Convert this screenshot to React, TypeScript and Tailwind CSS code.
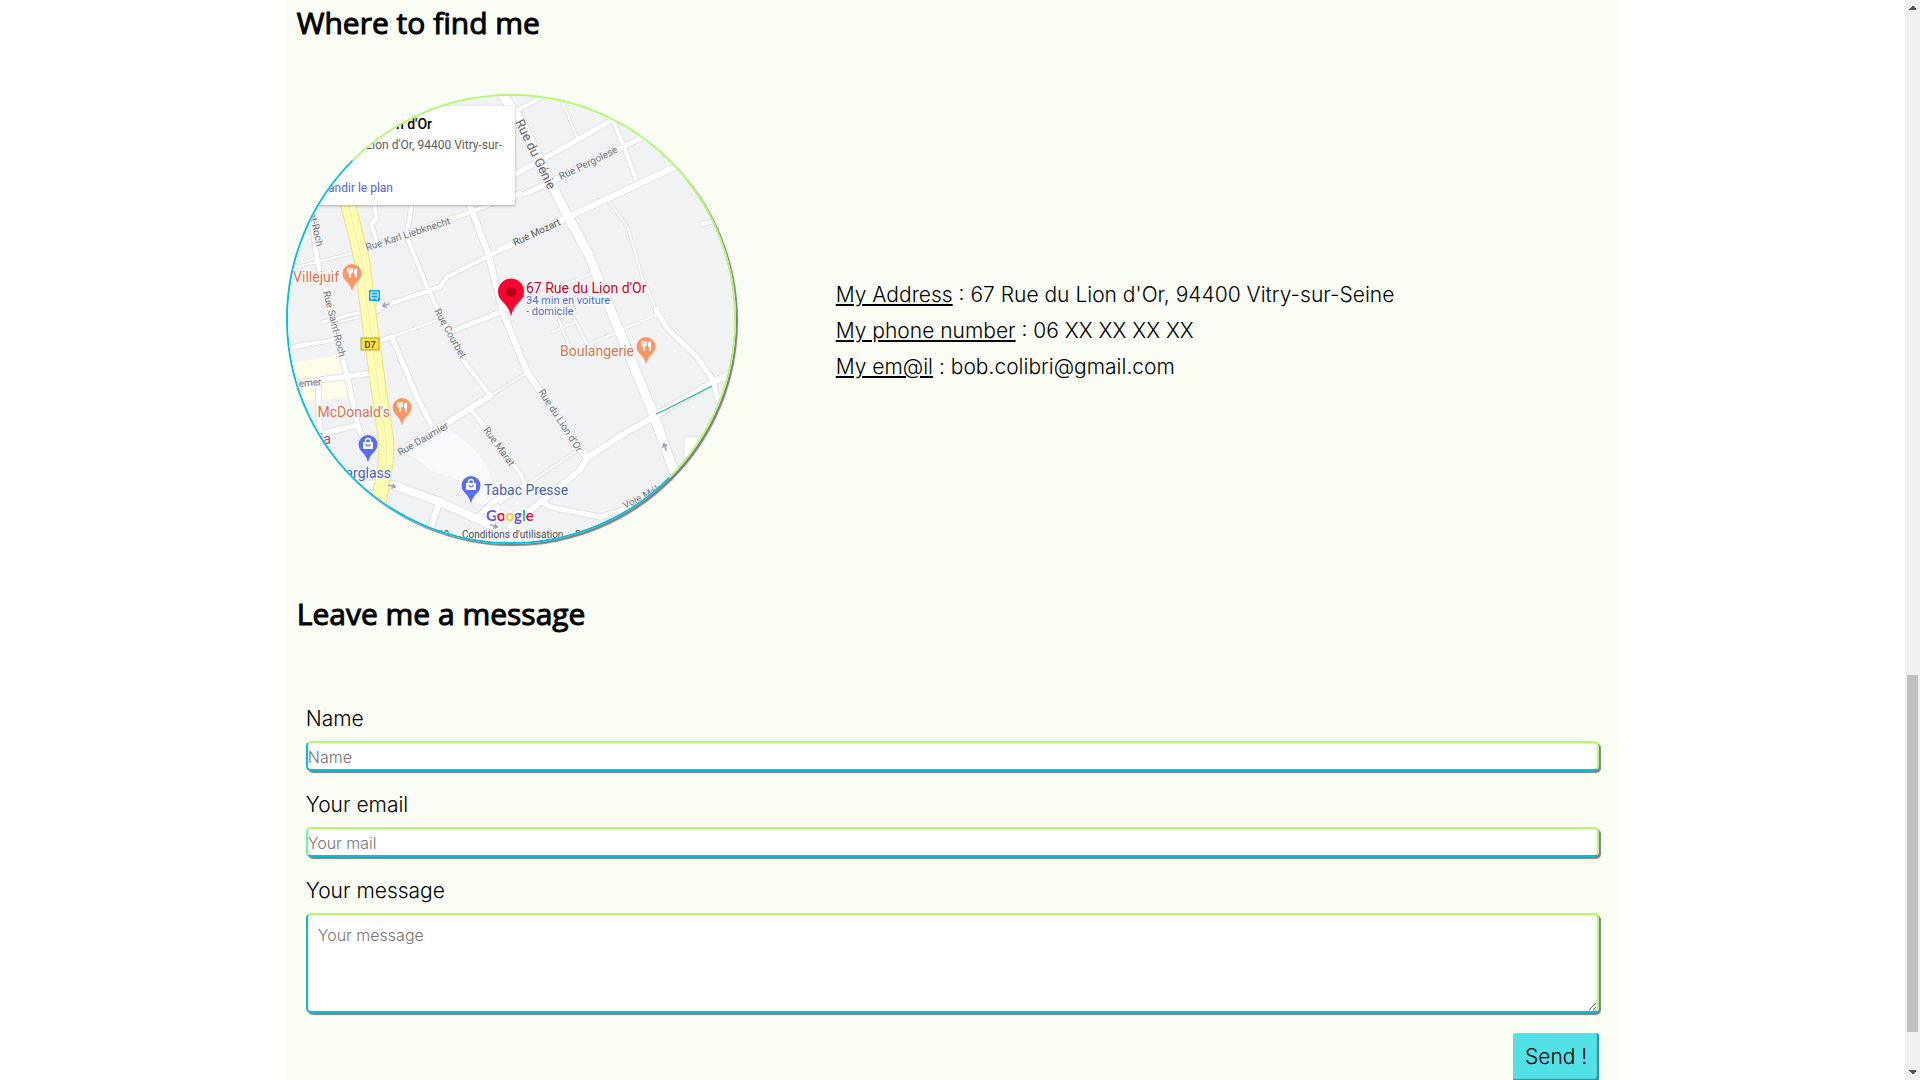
import React from "react";

const field =
  "block w-full rounded-[5px] border-2 border-t-[#b2fa6c] border-r-[#b2fa6c] border-b-[#00c0e0] bg-white font-light text-[16px] text-black placeholder:text-[#757575] placeholder:opacity-100 shadow-[2px_2px_1px_#808080] outline-none";

type Road = { d: string; w: number };

const roads: Road[] = [
  { d: "M293 268L353 253L367 247", w: 2 },
  { d: "M367 247L468 213L520 193", w: 4 },
  { d: "M375 200L375 210L377 218L371 224L377 242", w: 4 },
  { d: "M412 200L407 237L427 287L443 320L463 360L480 382L490 395", w: 4 },
  { d: "M312 217L317 260L325 287L343 360L348 380L358 427L368 448", w: 5 },
  { d: "M323 322L377 308", w: 3 },
  { d: "M340 322L380 311", w: 2 },
  { d: "M377 308L440 287L447 277L520 240", w: 4 },
  { d: "M286 349L298 346L333 340", w: 4 },
  { d: "M378 341L392 337", w: 4 },
  { d: "M392 337L443 318", w: 2 },
  { d: "M450 332L511 308", w: 5 },
  { d: "M392 337L417 397L433 428", w: 5 },
  { d: "M290 384L372 373", w: 5 },
  { d: "M318 383L320 434L358 425", w: 5 },
  { d: "M470 408L495 441L520 473L526 486", w: 4 },
  { d: "M490 396L520 377L530 371", w: 2 },
  { d: "M500 503L578 450", w: 2 },
  { d: "M480 515L493 502L525 486", w: 5 },
  { d: "M440 500L430 530", w: 6 },
  { d: "M518 110L542 97", w: 4 },
  { d: "M560 98L568 115L577 138", w: 2 },
  { d: "M510 177L547 157L614 119", w: 5 },
  { d: "M613 120L620 137L636 179", w: 4 },
  { d: "M512 198L527 193", w: 3 },
  { d: "M527 193L550 182L645 136", w: 5 },
  { d: "M663 150L668 167", w: 2 },
  { d: "M609 202L628 228L643 280L658 313", w: 2 },
  { d: "M656 310L667 328L697 357L713 380L720 408", w: 5 },
  { d: "M702 224L716 221", w: 4 },
  { d: "M592 273L533 298L515 306", w: 2 },
  { d: "M658 314L583 347L563 358", w: 2 },
  { d: "M552 332L575 322", w: 2 },
  { d: "M558 318L572 353", w: 2 },
  { d: "M574 318L588 347", w: 2 },
  { d: "M385 460L393 455L447 423L490 396", w: 6 },
  { d: "M468 200L488 253L503 313L527 372L555 413L587 458", w: 6 },
  { d: "M510 527L543 500L580 470L587 458L622 435L653 417L713 382L730 374", w: 6 },
  { d: "M543 502L550 507L600 517L623 510L662 490", w: 5 },
  { d: "M360 487L377 484L393 485L440 502L497 528", w: 8 },
  { d: "M500 250L568 217L675 167", w: 6 },
  { d: "M500 91L520 120L568 217L588 253L612 313L653 413L677 480", w: 9 },
];

type Label = { x: number; y: number; a: number; s: number; c: string; t: string };

const streets: Label[] = [
  { x: 367, y: 251, a: -18, s: 10, c: "#72767a", t: "Rue Karl Liebknecht" },
  { x: 515, y: 246, a: -25, s: 10, c: "#55564f", t: "Rue Mozart" },
  { x: 561, y: 180, a: -26, s: 10, c: "#72767a", t: "Rue Pergolese" },
  { x: 515, y: 122, a: 64, s: 13, c: "#65696d", t: "Rue du Génie" },
  { x: 306, y: 200, a: 77, s: 10, c: "#72767a", t: "Saint-Roch" },
  { x: 323, y: 292, a: 76, s: 10, c: "#72767a", t: "Rue Saint-Roch" },
  { x: 434, y: 311, a: 61, s: 10, c: "#72767a", t: "Rue Courbet" },
  { x: 299, y: 387, a: -5, s: 10, c: "#72767a", t: "emer" },
  { x: 400, y: 456, a: -30, s: 10, c: "#72767a", t: "Rue Daumier" },
  { x: 483, y: 430, a: 54, s: 10, c: "#72767a", t: "Rue Marat" },
  { x: 538, y: 392, a: 57, s: 10, c: "#72767a", t: "Rue du Lion d'Or" },
  { x: 625, y: 509, a: -27, s: 10, c: "#72767a", t: "Voie Mél" },
];

function Pin({ x, y, kind }: { x: number; y: number; kind: "food" | "shop" }) {
  return (
    <g transform={`translate(${x} ${y})`}>
      <path
        d="M0 19C-1 13-4 10-7 7A9.500 9.500 0 1 1 7 7C4 10 1 13 0 19Z"
        fill={kind === "food" ? "#ff9563" : "#586df5"}
        stroke="#fff"
        strokeWidth="1"
        paintOrder="stroke"
      />
      {kind === "food" ? (
        <>
          <path d="M-5-5H1V-2Q1 0-1 1V5H-3V1Q-5 0-5-2Z" fill="#fff" />
          <path d="M-3-5V-2M-1-5V-2" fill="none" stroke="#ff9563" strokeWidth="0.600" />
          <path d="M5-5V5H3V1H2V-2Q2-4 5-5Z" fill="#fff" />
        </>
      ) : (
        <>
          <path d="M-5-2H5V5H-5Z" fill="#fff" />
          <path d="M-2.500-2V-3A2.500 2.500 0 0 1 2.500-3V-2" fill="none" stroke="#fff" strokeWidth="1.300" />
          <path d="M-2 0A2 2 0 0 0 2 0" fill="none" stroke="#586df5" strokeWidth="1.200" />
        </>
      )}
    </g>
  );
}

function Arrow({ x, y, a }: { x: number; y: number; a: number }) {
  return (
    <path
      transform={`translate(${x} ${y}) rotate(${a})`}
      d="M-4 0H3M0-2.500L3.500 0L0 2.500"
      fill="none"
      stroke="#9a9eb0"
      strokeWidth="1.400"
    />
  );
}

function AddressMap() {
  return (
    <svg
      viewBox="288 96 446 446"
      className="block size-full font-['Roboto',sans-serif] font-normal"
      role="img"
      aria-label="Map of 67 Rue du Lion d'Or"
    >
      <defs>
        <filter id="card-shadow" x="-5%" y="-5%" width="110%" height="115%">
          <feDropShadow dx="0" dy="1" stdDeviation="1.500" floodColor="#000" floodOpacity="0.3" />
        </filter>
      </defs>
      <rect x="288" y="96" width="446" height="446" fill="#f0f2f4" />
      <path d="M288 364L336 355L347 377V397L298 402H288Z" fill="#fffde8" />
      <path d="M405 450L447 427L475 450L487 465L500 512L470 500L455 478L432 471Z" fill="#f8f9fb" />
      <g fill="none" stroke="#dfe2e6" strokeLinejoin="round" strokeLinecap="round">
        {roads.map((r) => (
          <path key={r.d} d={r.d} strokeWidth={r.w + 2} />
        ))}
      </g>
      <g fill="none" stroke="#fff" strokeLinejoin="round" strokeLinecap="round">
        {roads.map((r) => (
          <path key={r.d} d={r.d} strokeWidth={r.w} />
        ))}
      </g>
      <g fill="none" strokeLinejoin="round">
        <path d="M347 200L362 260L368 310L377 377L386 440Q388 460 378 505" stroke="#f8dc84" strokeWidth="16" />
        <path d="M347 200L362 260L368 310L377 377L386 440Q388 460 378 505" stroke="#fffdb0" strokeWidth="14" />
        <path d="M347 200L362 260L368 310L377 377L386 440Q388 460 383 480" stroke="#f0ecc0" strokeWidth="1" />
        <path d="M656 414L665 410L712 386" stroke="#1cbb80" strokeWidth="1.200" />
      </g>
      <Arrow x={386} y={305} a={160} />
      <Arrow x={392} y={486} a={15} />
      <Arrow x={494} y={526} a={20} />
      <Arrow x={665} y={447} a={-110} />

      <g stroke="#f4f5f7" strokeWidth="2" paintOrder="stroke">
        {streets.map((l) => (
          <text key={l.t} transform={`translate(${l.x} ${l.y}) rotate(${l.a})`} fontSize={l.s} fill={l.c}>
            {l.t}
          </text>
        ))}
      </g>

      <rect x="684" y="437" width="60" height="60" rx="1" fill="#fff" stroke="#e2e4e7" />
      <rect x="240" y="106" width="275" height="99" rx="1" fill="#fff" filter="url(#card-shadow)" />
      <g textAnchor="end">
        <text x="432" y="129" fontSize="14" fontWeight="500" fill="#000">67 Rue du Lion d'Or</text>
        <text x="502" y="149" fontSize="12" fill="#5b5b5b">67 Rue du Lion d'Or, 94400 Vitry-sur-</text>
        <text x="393" y="192" fontSize="12" fill="#5263e3">Agrandir le plan</text>
      </g>

      <rect x="369" y="290" width="11" height="11" rx="1" fill="#00a4f4" stroke="#fff" paintOrder="stroke" />
      <path d="M371 292H378V298H371ZM371 295H378M372 298V300M377 298V300" fill="none" stroke="#fff" />
      <rect x="361" y="338" width="18" height="12" fill="#ffe03f" stroke="#b49d2a" />
      <text x="370" y="348" fontSize="9" fontWeight="500" textAnchor="middle" fill="#333">D7</text>

      <Pin x={352} y={273} kind="food" />
      <Pin x={402} y={407} kind="food" />
      <Pin x={646} y={346} kind="food" />
      <Pin x={368} y={444} kind="shop" />
      <Pin x={471} y={485} kind="shop" />

      <g stroke="#fff" strokeWidth="2" paintOrder="stroke" fontSize="14">
        <text x="339" y="282" textAnchor="end" fill="#d9714b">Villejuif</text>
        <text x="390" y="417" textAnchor="end" fill="#d9714b">McDonald's</text>
        <text x="634" y="356" textAnchor="end" fill="#d9714b">Boulangerie</text>
        <text x="331" y="444" textAnchor="end" fill="#bf3a59">ia</text>
        <text x="391" y="478" textAnchor="end" fill="#4560b4">Carglass</text>
        <text x="484" y="495" fill="#4560b4">Tabac Presse</text>
        <text x="526" y="293" fill="#c9001c">67 Rue du Lion d'Or</text>
        <text x="526" y="304" fontSize="11" fill="#4766dc">34 min en voiture</text>
        <text x="526" y="315" fontSize="11" fill="#4766dc">- domicile</text>
      </g>

      <path
        d="M511 317C510 310 507 306 502 301A13 13 0 1 1 520 301C515 306 512 310 511 317Z"
        fill="#ff0030"
      />
      <circle cx="511" cy="292" r="5" fill="#b10018" />

      <rect x="440" y="529" width="130" height="14" fill="#f6f7f8" />
      <text x="462" y="538" fontSize="10" fill="#4c4c4c">Conditions d'utilisation</text>
      <text x="449" y="538" fontSize="10" textAnchor="end" fill="#4c4c4c">2020</text>
      <text x="575" y="538" fontSize="10" fill="#4c4c4c">Signaler</text>
      <text x="486" y="521" fontSize="15" fontWeight="700" stroke="#fff" strokeWidth="3" paintOrder="stroke" className="font-['Lato',sans-serif]">
        <tspan fill="#5a55f0">G</tspan>
        <tspan fill="#f0103c">o</tspan>
        <tspan fill="#ffc928">o</tspan>
        <tspan fill="#5a55f0">g</tspan>
        <tspan fill="#17b877">l</tspan>
        <tspan fill="#f0103c">e</tspan>
      </text>
    </svg>
  );
}

function Title({ children }: { children: React.ReactNode }) {
  return (
    <h2 className="px-[11px] font-['Open_Sans',sans-serif] text-[30px] leading-[46px] font-normal [-webkit-text-stroke:1px_black]">
      {children}
    </h2>
  );
}

function Scrollbar() {
  return (
    <div aria-hidden="true" className="flex w-[15px] shrink-0 flex-col items-center justify-between bg-[#f0f0f0]">
      <svg width="15" height="15" fill="#505050" shapeRendering="crispEdges">
        <path d="M4 10V9L7 6H8L11 9V10Z" />
      </svg>
      <div className="flex w-full grow flex-col px-[2px]">
        <div className="grow-[660]" />
        <div className="grow-[357] bg-[#c1c1c1]" />
        <div className="grow-[33]" />
      </div>
      <svg width="15" height="15" fill="#505050" shapeRendering="crispEdges">
        <path d="M4 5V6L7 9H8L11 6V5Z" />
      </svg>
    </div>
  );
}

export default function App() {
  return (
    <div className="flex h-screen overflow-hidden bg-white font-['Inter',sans-serif] text-black">
      <div className="min-w-0 grow overflow-hidden">
        <main className="mx-auto min-h-full w-[70%] bg-[#fafdf4] text-[21px] leading-9 font-light">
          <section>
            <Title>Where to find me</Title>
            <div className="mt-12 flex items-center gap-[100px]">
              <div className="size-[450px] shrink-0 overflow-hidden rounded-full border-2 border-t-[#b2fa6c] border-r-[#b2fa6c] border-b-[#00c0e0] border-l-[#00c0e0] shadow-[2px_2px_1px_#808080]">
                <AddressMap />
              </div>
              <address className="pt-6 not-italic">
                <p><span className="underline">My Address</span> : 67 Rue du Lion d'Or, 94400 Vitry-sur-Seine</p>
                <p><span className="underline">My phone number</span> : 06 XX XX XX XX</p>
                <p><span className="underline">My em@il</span> : bob.colibri@gmail.com</p>
              </address>
            </div>
          </section>
          <section className="mt-[47px]">
            <Title>Leave me a message</Title>
            <form className="mt-16 flex flex-col px-5" onSubmit={(e) => e.preventDefault()}>
              <label htmlFor="name">Name</label>
              <input id="name" type="text" placeholder="Name" className={`${field} mt-1 mb-4 h-[30px] border-l-[#00c0e0] pt-[2px]`} />
              <label htmlFor="email">Your email</label>
              <input id="email" type="email" placeholder="Your mail" className={`${field} mt-1 mb-4 h-[30px] border-l-[#5cfa9a] pt-[2px]`} />
              <label htmlFor="message">Your message</label>
              <textarea id="message" placeholder="Your message" className={`${field} mt-1 h-[100px] resize border-l-[#00c0e0] p-[10px] leading-5`} />
              <button type="submit" className="mt-5 self-end rounded-[3px] bg-[#52e1e6] px-3 py-[6px] shadow-[inset_-2px_-2px_1px_#2f8f93]">
                Send !
              </button>
            </form>
          </section>
        </main>
      </div>
      <Scrollbar />
    </div>
  );
}
